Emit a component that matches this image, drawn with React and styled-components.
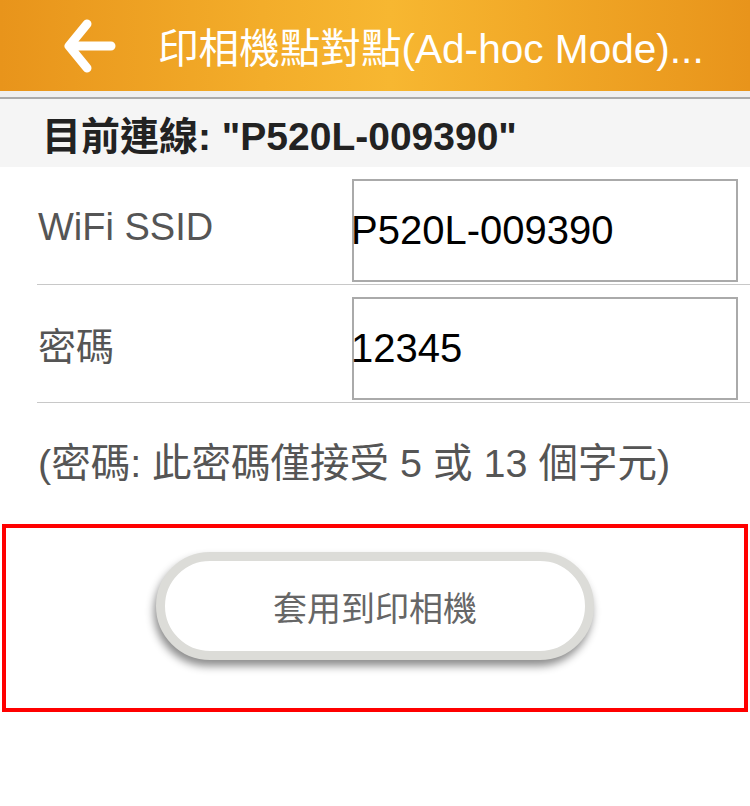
import React from 'react';
import styled, { createGlobalStyle } from 'styled-components';

const GlobalStyle = createGlobalStyle`
  html, body {
    margin: 0;
    padding: 0;
    background: #ffffff;
  }
  body {
    font-family: "Liberation Sans", "Noto Sans CJK TC", sans-serif;
  }
`;

const Page = styled.div`
  width: 750px;
  min-height: 806px;
  background: #ffffff;
`;

const Header = styled.header`
  height: 91px;
  display: flex;
  align-items: center;
  background: linear-gradient(90deg, #e8941b 0%, #f3ad2a 35%, #f7b731 52%, #f2aa28 70%, #e8941b 100%);
`;

const BackButton = styled.button`
  width: 70px;
  height: 70px;
  margin-left: 54px;
  padding: 0;
  border: none;
  background: transparent;
  display: flex;
  align-items: center;
  justify-content: center;
  cursor: pointer;
`;

const Title = styled.h1`
  margin: 0 0 0 34px;
  color: #ffffff;
  font-size: 40.6px;
  font-weight: normal;
  white-space: nowrap;
`;

const HeaderEdge = styled.div`
  height: 6px;
  background: #efefef;
  border-bottom: 2px solid #ababab;
`;

const Status = styled.div`
  height: 68px;
  background: #f5f5f5;
  display: flex;
  align-items: center;
  padding-left: 42px;
  font-size: 39px;
  font-weight: bold;
  color: #222222;
`;

const Form = styled.div`
  margin-left: 37px;
`;

const Row = styled.div`
  display: flex;
  align-items: center;
  padding: 12px 0 2px;
  border-bottom: 1px solid #c8c8c8;
`;

const Label = styled.div`
  width: 314px;
  padding-left: 1px;
  margin-top: ${p => p.$shift || 0}px;
  font-size: 38px;
  color: #555555;
`;

const Field = styled.div`
  width: 382px;
  height: 99px;
  border: 2px solid #aaaaaa;
  display: flex;
  align-items: center;
  font-size: 40px;
  color: #000000;
  text-indent: -3px;
`;

const Note = styled.p`
  margin: 0;
  box-sizing: border-box;
  height: 121px;
  padding: 37px 0 0 38px;
  font-size: 39.5px;
  line-height: 46px;
  color: #555555;
`;

const Highlight = styled.div`
  margin: 0 2px;
  border: 4px solid #ff0000;
  display: flex;
  justify-content: center;
  align-items: flex-start;
  padding-top: 24px;
  box-sizing: border-box;
  height: 188px;
`;

const ApplyButton = styled.button`
  width: 438px;
  height: 108px;
  box-sizing: border-box;
  border-radius: 54px;
  border: 9px solid #dcdcd8;
  background: #ffffff;
  box-shadow: -2px 6px 8px rgba(0, 0, 0, 0.45);
  font-family: "Noto Sans CJK TC", sans-serif;
  font-size: 34px;
  color: #666666;
  cursor: pointer;
`;

function BackArrow() {
  return (
    <svg width="60" height="60" viewBox="0 0 60 60">
      <path
        d="M52 30 H12 M28 8 L10 30 L28 52"
        fill="none"
        stroke="#ffffff"
        strokeWidth="9"
        strokeLinecap="round"
        strokeLinejoin="round"
      />
    </svg>
  );
}

export default function App() {
  return (
    <Page>
      <GlobalStyle />
      <Header>
        <BackButton aria-label="back">
          <BackArrow />
        </BackButton>
        <Title>印相機點對點(Ad-hoc Mode)...</Title>
      </Header>
      <HeaderEdge />
      <Status>目前連線: "P520L-009390"</Status>
      <Form>
        <Row>
          <Label $shift={-6}>WiFi SSID</Label>
          <Field>P520L-009390</Field>
        </Row>
        <Row>
          <Label $shift={-10}>密碼</Label>
          <Field>12345</Field>
        </Row>
      </Form>
      <Note>(密碼: 此密碼僅接受 5 或 13 個字元)</Note>
      <Highlight>
        <ApplyButton>套用到印相機</ApplyButton>
      </Highlight>
    </Page>
  );
}
